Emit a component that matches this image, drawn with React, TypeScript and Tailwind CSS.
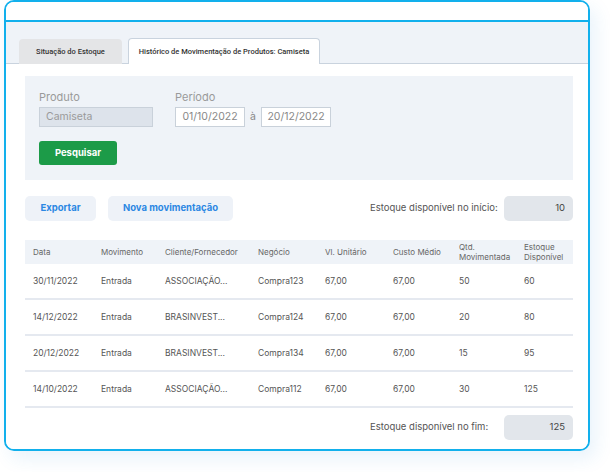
import React from "react"

const rows = [
  { data: "30/11/2022", mov: "Entrada", cliente: "ASSOCIAÇÃO...", negocio: "Compra123", vl: "67,00", custo: "67,00", qtd: "50", estoque: "60" },
  { data: "14/12/2022", mov: "Entrada", cliente: "BRASINVEST...", negocio: "Compra124", vl: "67,00", custo: "67,00", qtd: "20", estoque: "80" },
  { data: "20/12/2022", mov: "Entrada", cliente: "BRASINVEST...", negocio: "Compra134", vl: "67,00", custo: "67,00", qtd: "15", estoque: "95" },
  { data: "14/10/2022", mov: "Entrada", cliente: "ASSOCIAÇÃO...", negocio: "Compra112", vl: "67,00", custo: "67,00", qtd: "30", estoque: "125" },
]

const cols = "grid grid-cols-[68px_64px_93px_67px_68px_66px_65px_1fr]"

export default function App() {
  return (
    <div className="w-[610px] h-[472px] bg-white pl-[4px] font-['Inter',sans-serif] text-[#555]">
      {/* Card */}
      <div className="w-[586px] h-[451px] border-2 border-[#12b0ec] rounded-[10px] overflow-hidden flex flex-col shadow-[6px_8px_18px_rgba(40,140,220,0.10)]">
        <div className="h-[20px] shrink-0 border-b-2 border-[#12b0ec] bg-white" />

        {/* Tabs */}
        <div className="h-[42px] shrink-0 bg-[#eff3f8] border-b border-[#c9d3de] flex items-end gap-[6px] pl-[13px] font-['Roboto',sans-serif]">
          <div className="h-[25px] w-[103px] bg-[#e4e5e7] rounded-t-[4px] flex items-center justify-center whitespace-nowrap text-[7.5px] font-medium text-[#333] -mb-px">
            Situação do Estoque
          </div>
          <div className="h-[26px] w-[192px] bg-white border border-b-0 border-[#c9d3de] rounded-t-[4px] flex items-center justify-center whitespace-nowrap text-[7.5px] font-medium text-[#333] -mb-px">
            Histórico de Movimentação de Produtos: Camiseta
          </div>
        </div>

        {/* Content */}
        <div className="flex-1 bg-white pl-[19px] pr-[15px] pt-[12px] flex flex-col">
          {/* Filter panel */}
          <div className="h-[104px] bg-[#eff3f8] px-[14px] pt-[14px]">
            <div className="flex gap-[22px]">
              <div className="flex flex-col">
                <span className="text-[11px] leading-[14px] text-[#9a9a9a]">Produto</span>
                <div className="mt-[3px] w-[114px] h-[20px] bg-[#dde3eb] border border-[#c9d1da] flex items-center px-[6px] text-[10.5px] text-[#9a9a9a]">
                  Camiseta
                </div>
              </div>
              <div className="flex flex-col">
                <span className="text-[11px] leading-[14px] text-[#9a9a9a]">Período</span>
                <div className="mt-[3px] flex items-center">
                  <div className="w-[70px] h-[20px] bg-white border border-[#c9d1da] flex items-center justify-center text-[10.5px] text-[#888]">
                    01/10/2022
                  </div>
                  <span className="w-[16px] text-center text-[10.5px] text-[#888]">à</span>
                  <div className="w-[70px] h-[20px] bg-white border border-[#c9d1da] flex items-center justify-center text-[10.5px] text-[#888]">
                    20/12/2022
                  </div>
                </div>
              </div>
            </div>
            <button className="mt-[14px] w-[78px] h-[24px] bg-[#1c9b48] rounded-[3px] text-white text-[9.5px] font-bold">
              Pesquisar
            </button>
          </div>

          {/* Actions */}
          <div className="mt-[16px] flex items-center">
            <button className="w-[71px] h-[25px] bg-[#eef2f8] rounded-[5px] text-[#2b87e3] text-[9.5px] font-bold">
              Exportar
            </button>
            <button className="ml-[12px] w-[125px] h-[25px] bg-[#eef2f8] rounded-[5px] text-[#2b87e3] text-[9.5px] font-bold">
              Nova movimentação
            </button>
            <div className="ml-auto flex items-center">
              <span className="w-[134px] text-[9.5px] text-[#555]">Estoque disponível no início:</span>
              <div className="w-[69px] h-[25px] bg-[#e2e6eb] rounded-[5px] flex items-center justify-end pr-[8px] text-[9.5px] text-[#444]">
                10
              </div>
            </div>
          </div>

          {/* Table */}
          <div className="mt-[19px]">
            <div className={`${cols} h-[24px] bg-[#eff3f8] items-center text-[8px] leading-[10px] text-[#666]`}>
              <span className="pl-[8px]">Data</span>
              <span className="pl-[8px]">Movimento</span>
              <span className="pl-[8px]">Cliente/Fornecedor</span>
              <span className="pl-[8px]">Negócio</span>
              <span className="pl-[8px]">Vl. Unitário</span>
              <span className="pl-[8px]">Custo Médio</span>
              <span className="pl-[8px]">Qtd.<br />Movimentada</span>
              <span className="pl-[8px]">Estoque<br />Disponível</span>
            </div>
            {rows.map((r) => (
              <div key={r.data + r.negocio} className={`${cols} h-[36px] items-center border-b-2 border-[#e5e9f0] text-[8.5px] text-[#555]`}>
                <span className="pl-[8px]">{r.data}</span>
                <span className="pl-[8px]">{r.mov}</span>
                <span className="pl-[8px]">{r.cliente}</span>
                <span className="pl-[8px]">{r.negocio}</span>
                <span className="pl-[8px]">{r.vl}</span>
                <span className="pl-[8px]">{r.custo}</span>
                <span className="pl-[8px]">{r.qtd}</span>
                <span className="pl-[8px]">{r.estoque}</span>
              </div>
            ))}
          </div>

          {/* Footer */}
          <div className="mt-[7px] flex items-center justify-end">
            <span className="w-[134px] text-[9.5px] text-[#555]">Estoque disponível no fim:</span>
            <div className="w-[69px] h-[25px] bg-[#e2e6eb] rounded-[5px] flex items-center justify-end pr-[8px] text-[9.5px] text-[#444]">
              125
            </div>
          </div>
        </div>
      </div>
    </div>
  )
}
